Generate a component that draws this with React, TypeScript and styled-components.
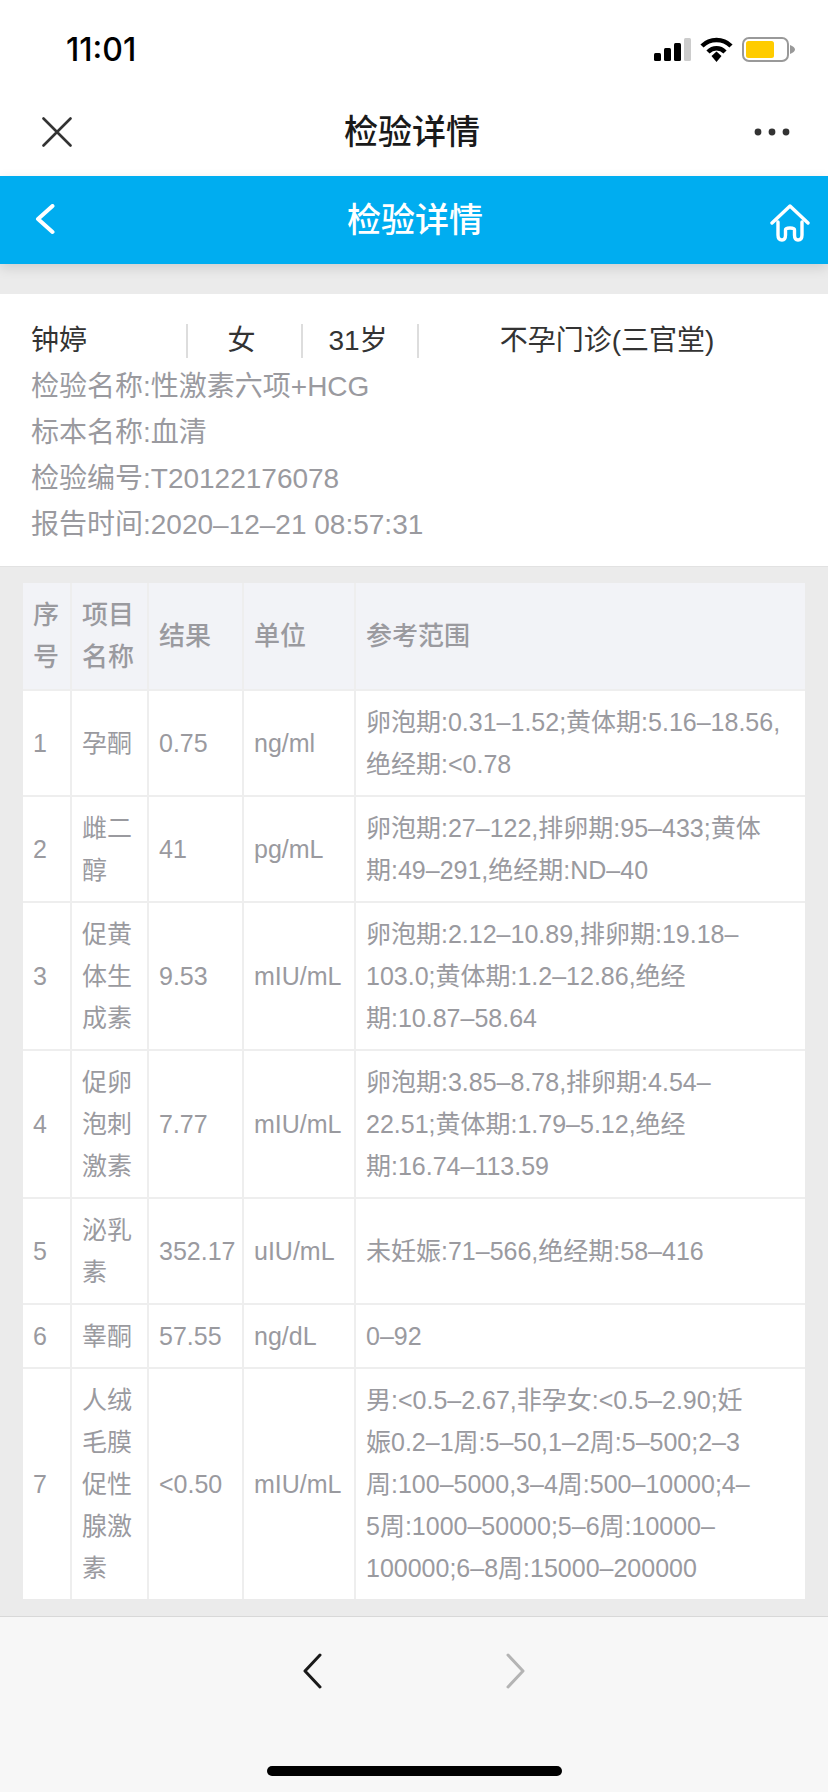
import React from 'react'
import styled, { createGlobalStyle } from 'styled-components'

const GlobalStyle = createGlobalStyle`
  html, body {
    margin: 0;
    padding: 0;
    background: #ebebeb;
    font-family: "Liberation Sans", "Noto Sans CJK SC", sans-serif;
  }
`

const Page = styled.div`
  width: 828px;
  height: 1792px;
  display: flex;
  flex-direction: column;
  overflow: hidden;
  background: #ebebeb;
`

const StatusBar = styled.div`
  height: 88px;
  flex: none;
  background: #fff;
  display: flex;
  align-items: center;
  justify-content: space-between;
  padding: 10px 33px 0 66px;
  box-sizing: border-box;
`

const Clock = styled.div`
  font-size: 32px;
  font-weight: 500;
  color: #000;
  font-family: "Inter", sans-serif;
`

const StatusIcons = styled.div`
  display: flex;
  align-items: center;
  gap: 9px;
`

const NavBar = styled.div`
  height: 88px;
  flex: none;
  background: #fff;
  display: flex;
  align-items: center;
  justify-content: space-between;
  padding: 0 38px 0 42px;
  box-sizing: border-box;
  position: relative;
`

const NavTitle = styled.div`
  position: absolute;
  left: 0;
  right: 4px;
  top: 0;
  line-height: 88px;
  text-align: center;
  font-size: 34px;
  font-weight: 500;
  color: #1a1a1a;
`

const Header = styled.div`
  height: 88px;
  flex: none;
  background: #00adf0;
  display: flex;
  align-items: center;
  justify-content: space-between;
  padding: 0 18px 0 35px;
  box-sizing: border-box;
  position: relative;
  box-shadow: 0 4px 12px rgba(0, 0, 0, 0.12);
`

const HeaderTitle = styled.div`
  position: absolute;
  left: 2px;
  right: 0;
  top: 0;
  line-height: 88px;
  text-align: center;
  font-size: 34px;
  font-weight: 500;
  color: #fff;
`

const HomeIcon = styled.svg`
  margin-top: 6px;
`

const InfoCard = styled.div`
  margin-top: 30px;
  height: 273px;
  flex: none;
  background: #fff;
  border-bottom: 1px solid #e2e2e2;
  box-sizing: border-box;
  padding: 24px 31px 0;
`

const PatientRow = styled.div`
  display: flex;
  height: 46px;
  align-items: center;
  font-size: 28px;
  color: #333;
`

const PatientCell = styled.div<{ $width: number; $align?: string; $pad?: number }>`
  width: ${({ $width }) => $width}px;
  height: 34px;
  line-height: 34px;
  text-align: ${({ $align }) => $align || 'center'};
  padding-right: ${({ $pad }) => $pad || 0}px;
  border-right: 2px solid #ddd;
  box-sizing: border-box;
  flex: none;

  &:last-child {
    border-right: none;
  }
`

const InfoLine = styled.div`
  font-size: 28px;
  line-height: 46px;
  color: #9a9a9f;
`

const TableWrap = styled.div`
  padding: 16px 23px 0;
  flex: 1;
`

const Table = styled.table`
  width: 782px;
  table-layout: fixed;
  border-collapse: collapse;
  background: #fff;
  font-size: 25px;
  color: #9a9a9f;
`

const Th = styled.th`
  background: #f2f3f7;
  font-weight: 500;
  font-size: 26px;
  line-height: 42px;
  padding: 11px 10px;
  text-align: left;
  border-left: 2px solid #eeeeee;
  box-sizing: border-box;

  &:first-child {
    border-left: none;
  }
`

const Td = styled.td<{ $nowrap?: boolean }>`
  line-height: 42px;
  padding: 10px;
  text-align: left;
  white-space: ${({ $nowrap }) => ($nowrap ? 'nowrap' : 'pre-line')};
  border-left: 2px solid #eeeeee;
  border-top: 2px solid #eeeeee;
  box-sizing: border-box;

  &:first-child {
    border-left: none;
  }
`

const Toolbar = styled.div`
  height: 176px;
  flex: none;
  background: #f7f7f7;
  border-top: 1px solid #d8d8d8;
  box-sizing: border-box;
  position: relative;
  display: flex;
  justify-content: center;
  gap: 184px;
  padding-top: 36px;
`

const HomeBar = styled.div`
  position: absolute;
  left: 267px;
  bottom: 16px;
  width: 295px;
  height: 10px;
  border-radius: 5px;
  background: #000;
`

const rows = [
  ['1', '孕酮', '0.75', 'ng/ml', '卵泡期:0.31–1.52;黄体期:5.16–18.56,\n绝经期:<0.78'],
  ['2', '雌二醇', '41', 'pg/mL', '卵泡期:27–122,排卵期:95–433;黄体\n期:49–291,绝经期:ND–40'],
  ['3', '促黄体生成素', '9.53', 'mIU/mL', '卵泡期:2.12–10.89,排卵期:19.18–\n103.0;黄体期:1.2–12.86,绝经\n期:10.87–58.64'],
  ['4', '促卵泡刺激素', '7.77', 'mIU/mL', '卵泡期:3.85–8.78,排卵期:4.54–\n22.51;黄体期:1.79–5.12,绝经\n期:16.74–113.59'],
  ['5', '泌乳素', '352.17', 'uIU/mL', '未妊娠:71–566,绝经期:58–416'],
  ['6', '睾酮', '57.55', 'ng/dL', '0–92'],
  ['7', '人绒毛膜促性腺激素', '<0.50', 'mIU/mL', '男:<0.5–2.67,非孕女:<0.5–2.90;妊\n娠0.2–1周:5–50,1–2周:5–500;2–3\n周:100–5000,3–4周:500–10000;4–\n5周:1000–50000;5–6周:10000–\n100000;6–8周:15000–200000'],
]

export default function App() {
  return (
    <Page>
      <GlobalStyle />
      <StatusBar>
        <Clock>11:01</Clock>
        <StatusIcons>
          <svg width="37" height="23" viewBox="0 0 37 23">
            <rect x="0" y="15" width="7" height="8" rx="1.5" fill="#000" />
            <rect x="10" y="10" width="7" height="13" rx="1.5" fill="#000" />
            <rect x="20" y="5" width="7" height="18" rx="1.5" fill="#000" />
            <rect x="30" y="0" width="7" height="23" rx="1.5" fill="#ccc" />
          </svg>
          <svg width="33" height="25" viewBox="0 0 33 25">
            <path d="M2 9 C10 1 23 1 31 9" fill="none" stroke="#000" strokeWidth="4.5" />
            <path d="M8 15 C13 10 20 10 25 15" fill="none" stroke="#000" strokeWidth="4.5" />
            <path d="M11.5 19 L16.5 14.5 L21.5 19 L16.5 25 Z" fill="#000" />
          </svg>
          <svg width="53" height="25" viewBox="0 0 53 25">
            <rect x="1" y="1" width="45" height="23" rx="6" fill="none" stroke="#999" strokeWidth="2" />
            <rect x="4" y="4" width="28" height="17" rx="2.5" fill="#ffcc00" />
            <path d="M48 8 C51 9 53 11 53 12.5 C53 14 51 16 48 17 Z" fill="#999" />
          </svg>
        </StatusIcons>
      </StatusBar>
      <NavBar>
        <NavTitle>检验详情</NavTitle>
        <svg width="30" height="30" viewBox="0 0 30 30">
          <path d="M1.5 1.5 L28.5 28.5 M28.5 1.5 L1.5 28.5" stroke="#333" strokeWidth="2.6" strokeLinecap="round" />
        </svg>
        <svg width="36" height="8" viewBox="0 0 36 8">
          <circle cx="4" cy="4" r="3.4" fill="#333" />
          <circle cx="18" cy="4" r="3.4" fill="#333" />
          <circle cx="32" cy="4" r="3.4" fill="#333" />
        </svg>
      </NavBar>
      <Header>
        <HeaderTitle>检验详情</HeaderTitle>
        <svg width="20" height="32" viewBox="0 0 20 32">
          <path d="M17.5 2 L3 15 L17.5 28" fill="none" stroke="#fff" strokeWidth="4" strokeLinecap="round" strokeLinejoin="round" />
        </svg>
        <HomeIcon width="40" height="38" viewBox="0 0 40 38">
          <path d="M2 19 L20 2 L38 19 M8 18 V31 Q8 36 12 36 Q15.5 36 15.5 31 V26 Q15.5 24 20 24 Q24.5 24 24.5 26 V31 Q24.5 36 28 36 Q32 36 32 31 V18" fill="none" stroke="#fff" strokeWidth="3.4" strokeLinecap="round" strokeLinejoin="round" />
        </HomeIcon>
      </Header>
      <InfoCard>
        <PatientRow>
          <PatientCell $width={157} $align="left">钟婷</PatientCell>
          <PatientCell $width={115} $pad={6}>女</PatientCell>
          <PatientCell $width={116} $pad={4}>31岁</PatientCell>
          <PatientCell $width={376}>不孕门诊(三官堂)</PatientCell>
        </PatientRow>
        <InfoLine>检验名称:性激素六项+HCG</InfoLine>
        <InfoLine>标本名称:血清</InfoLine>
        <InfoLine>检验编号:T20122176078</InfoLine>
        <InfoLine>报告时间:2020–12–21 08:57:31</InfoLine>
      </InfoCard>
      <TableWrap>
        <Table>
          <colgroup>
            <col width="48" />
            <col width="77" />
            <col width="95" />
            <col width="112" />
            <col width="450" />
          </colgroup>
          <thead>
            <tr>
              <Th>序号</Th>
              <Th>项目名称</Th>
              <Th>结果</Th>
              <Th>单位</Th>
              <Th>参考范围</Th>
            </tr>
          </thead>
          <tbody>
            {rows.map((row) => (
              <tr key={row[0]}>
                {row.map((cell, i) => (
                  <Td key={i} $nowrap={i === 2 || i === 3}>{cell}</Td>
                ))}
              </tr>
            ))}
          </tbody>
        </Table>
      </TableWrap>
      <Toolbar>
        <svg width="20" height="36" viewBox="0 0 20 36">
          <path d="M18 2 L3 18 L18 34" fill="none" stroke="#1a1a1a" strokeWidth="3" strokeLinecap="round" strokeLinejoin="round" />
        </svg>
        <svg width="20" height="36" viewBox="0 0 20 36">
          <path d="M2 2 L17 18 L2 34" fill="none" stroke="#b4b4b4" strokeWidth="3" strokeLinecap="round" strokeLinejoin="round" />
        </svg>
        <HomeBar />
      </Toolbar>
    </Page>
  )
}
